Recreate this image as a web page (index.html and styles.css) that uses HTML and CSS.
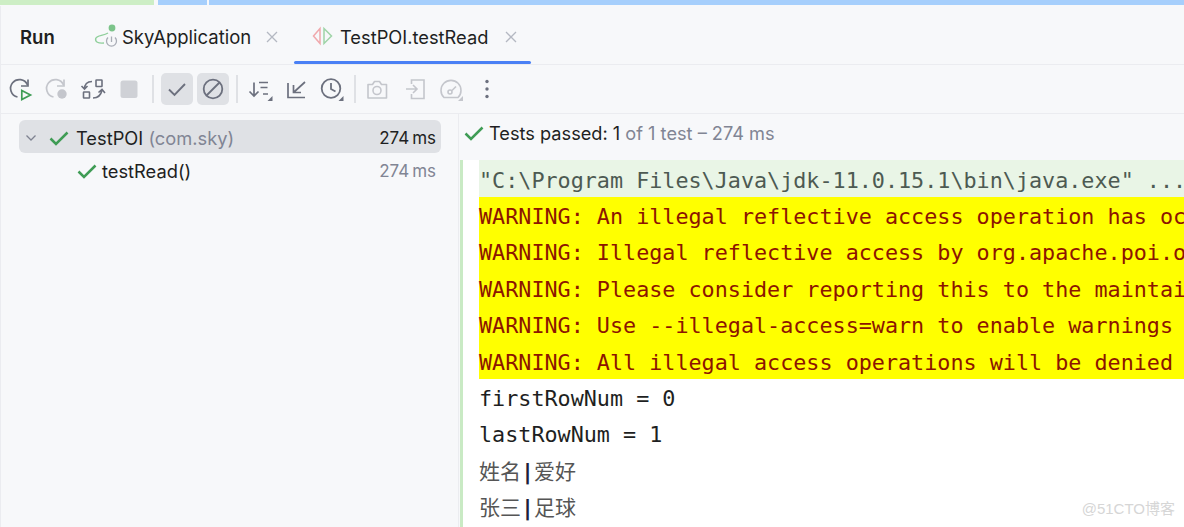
FILE: index.html
```html
<!DOCTYPE html>
<html lang="en">
<head>
<meta charset="utf-8">
<title>Run</title>
<link rel="stylesheet" href="styles.css">
</head>
<body>
<div class="strip"><span class="s-green"></span><span class="s-blue1"></span><span class="s-blue2"></span></div>
<header class="tabs">
  <div class="run-title">Run</div>
  <div class="tab tab-sky">
    <svg class="tab-icon" width="24" height="24" viewBox="0 0 24 24" fill="none">
      <circle cx="18" cy="3" r="3.400" fill="#7cc48a"/>
      <path d="M14 8C9 11 3 10 1.700 13.500C1 17 4 18.500 10 18" stroke="#8fcf9b" stroke-width="1.400"/>
      <path d="M14 12.500a5 5 0 1 0 7 0" stroke="#a9adb6" stroke-width="1.300"/>
      <path d="M17.500 11.500v5.500" stroke="#a9adb6" stroke-width="1.300"/>
    </svg>
    <span>SkyApplication</span>
    <svg class="close" width="12" height="12" viewBox="0 0 12 12"><path d="M1 1l10 10M11 1L1 11" stroke="#b4b8c2" stroke-width="1.300"/></svg>
  </div>
  <div class="tab tab-active">
    <svg class="tab-icon" width="24" height="24" viewBox="0 0 24 24" fill="none">
      <path d="M10 3.500L3.500 11l6.500 7.500z" stroke="#f0a8ac" stroke-width="1.500"/>
      <path d="M14 3.500L21.500 11 14 18.500z" stroke="#9fd4a8" stroke-width="1.500"/>
    </svg>
    <span>TestPOI.testRead</span>
    <svg class="close" width="12" height="12" viewBox="0 0 12 12"><path d="M1 1l10 10M11 1L1 11" stroke="#b4b8c2" stroke-width="1.300"/></svg>
  </div>
</header>
<nav class="toolbar">
  <span class="tool"><svg width="24" height="24" viewBox="0 0 24 24" fill="none"><path d="M8.500 20A8.800 8.800 0 1 1 18.500 8" stroke="#6c707e" stroke-width="1.700"/><path d="M19 2.500V9h-7" stroke="#6c707e" stroke-width="1.700"/><path d="M12.800 13.500l8.700 4.500-8.700 4.500z" stroke="#3f9c55" stroke-width="1.700"/></svg></span>
  <span class="tool"><svg width="24" height="24" viewBox="0 0 24 24" fill="none"><path d="M8.500 20A8.800 8.800 0 1 1 18.500 8" stroke="#c4c6cc" stroke-width="1.700"/><path d="M19 2.500V9h-7" stroke="#c4c6cc" stroke-width="1.700"/><circle cx="17" cy="17" r="4.700" fill="#c4c6cc"/></svg></span>
  <span class="tool"><svg width="24" height="24" viewBox="0 0 24 24" fill="none"><rect x="15" y="3" width="6" height="6.500" rx="0.500" stroke="#6c707e" stroke-width="1.600"/><rect x="2.500" y="15" width="6" height="6" rx="0.500" stroke="#6c707e" stroke-width="1.600"/><path d="M11 4.500C6 4.500 3.500 7.500 3.500 12M0.500 9l3 3 3-3M12 21c5 0 8-3 9-8M17.500 15.500l3.500-3 3 3.500" stroke="#6c707e" stroke-width="1.600"/></svg></span>
  <span class="tool"><svg width="24" height="24" viewBox="0 0 24 24"><rect x="3.500" y="3.500" width="17" height="17.500" rx="2.500" fill="#cfd1d6"/></svg></span>
  <i class="sep"></i>
  <span class="tool on"><svg width="24" height="24" viewBox="0 0 24 24" fill="none"><path d="M4 12.500l5.500 5.500L20 7" stroke="#6c707e" stroke-width="1.900"/></svg></span>
  <span class="tool on"><svg width="24" height="24" viewBox="0 0 24 24" fill="none"><circle cx="12" cy="12" r="9.300" stroke="#6c707e" stroke-width="1.800"/><path d="M5.500 18.500L18.500 5.500" stroke="#6c707e" stroke-width="1.800"/></svg></span>
  <i class="sep sep-mid"></i>
  <span class="tool"><svg width="24" height="24" viewBox="0 0 24 24" fill="none"><path d="M6 5.500V19M1.500 14.500L6 19l4.500-4.500M11 5.500h9M12.500 10.500h7M15 17h5" stroke="#6c707e" stroke-width="1.700"/><path d="M24.500 19v5h-5z" fill="#6c707e"/></svg></span>
  <span class="tool tool-narrow"><svg width="24" height="24" viewBox="0 0 24 24" fill="none"><path d="M4 6v14.500h17M21 5L9.500 15.500M9.500 8v7.500H17" stroke="#6c707e" stroke-width="1.700"/></svg></span>
  <span class="tool"><svg width="24" height="24" viewBox="0 0 24 24" fill="none"><circle cx="12" cy="11.500" r="9.300" stroke="#6c707e" stroke-width="1.800"/><path d="M12 6v6l4.500 2.500" stroke="#6c707e" stroke-width="1.800"/><path d="M24.500 19v5h-5z" fill="#6c707e"/></svg></span>
  <i class="sep sep-last"></i>
  <span class="tool tool-wide"><svg width="24" height="24" viewBox="0 0 24 24" fill="none"><path d="M3 7.500h4.500L9.500 4.500h5L16.500 7.500H21.500v13.500H3z" stroke="#c4c6cc" stroke-width="1.600" stroke-linejoin="round"/><circle cx="12" cy="13.500" r="4" stroke="#c4c6cc" stroke-width="1.600"/></svg></span>
  <span class="tool"><svg width="24" height="24" viewBox="0 0 24 24" fill="none"><path d="M8.500 7V3H21v18.500H8.500V17M3 12h11M10 8l4 4-4 4" stroke="#c4c6cc" stroke-width="1.600"/></svg></span>
  <span class="tool"><svg width="24" height="24" viewBox="0 0 24 24" fill="none"><path d="M5 20.500a10 10 0 1 1 14 0z" stroke="#c4c6cc" stroke-width="1.600"/><circle cx="11" cy="15" r="2" stroke="#c4c6cc" stroke-width="1.600"/><path d="M13 13.500l4-4" stroke="#c4c6cc" stroke-width="1.600"/><path d="M24 19v5h-5z" fill="#c4c6cc"/></svg></span>
  <span class="tool"><svg width="24" height="24" viewBox="0 0 24 24"><circle cx="12" cy="4.500" r="1.700" fill="#6c707e"/><circle cx="12" cy="12" r="1.700" fill="#6c707e"/><circle cx="12" cy="19.500" r="1.700" fill="#6c707e"/></svg></span>
</nav>
<main class="panes">
  <aside class="tree">
    <div class="row row-sel">
      <svg class="chev" width="12" height="12" viewBox="0 0 12 12" fill="none"><path d="M1.500 3.500L6 8l4.500-4.500" stroke="#7f8391" stroke-width="1.300"/></svg>
      <svg class="check" width="20" height="20" viewBox="0 0 20 20" fill="none"><path d="M1.500 10.500L7 16 18.500 4.500" stroke="#3f9c55" stroke-width="2.500"/></svg>
      <span class="name">TestPOI <em>(com.sky)</em></span>
      <span class="time">274<b>ms</b></span>
    </div>
    <div class="row row-child">
      <svg class="check" width="20" height="20" viewBox="0 0 20 20" fill="none"><path d="M1.500 10.500L7 16 18.500 4.500" stroke="#3f9c55" stroke-width="2.500"/></svg>
      <span class="name">testRead()</span>
      <span class="time dim">274<b>ms</b></span>
    </div>
  </aside>
  <section class="output">
    <div class="status">
      <svg class="check" width="20" height="20" viewBox="0 0 20 20" fill="none"><path d="M1.500 10.500L7 16 18.500 4.500" stroke="#3f9c55" stroke-width="2.500"/></svg>
      <span>Tests passed: 1 <em>of 1 test – 274 ms</em></span>
    </div>
    <div class="console">
      <div class="line cmd">"C:\Program Files\Java\jdk-11.0.15.1\bin\java.exe" ...</div>
      <div class="line warn">WARNING: An illegal reflective access operation has occurred</div>
      <div class="line warn">WARNING: Illegal reflective access by org.apache.poi.openxml4j.util</div>
      <div class="line warn">WARNING: Please consider reporting this to the maintainers of org</div>
      <div class="line warn">WARNING: Use --illegal-access=warn to enable warnings of further</div>
      <div class="line warn">WARNING: All illegal access operations will be denied in a future</div>
      <div class="line">firstRowNum = 0</div>
      <div class="line">lastRowNum = 1</div>
      <div class="line cjk">姓名<b>|</b>爱好</div>
      <div class="line cjk">张三<b>|</b>足球</div>
    </div>
  </section>
</main>
<div class="mark">@51CTO博客</div>
</body>
</html>
```
FILE: styles.css
```css
* { box-sizing: border-box; }
html, body { margin: 0; height: 100%; overflow: hidden; }
body { width: 1184px; height: 527px; background: #f7f8fa; color: #1e1f22; font-family: Inter, "Noto Sans", sans-serif; position: relative; display: flex; flex-direction: column; }
svg { overflow: visible; }
.strip { height: 6px; display: flex; flex: none; background: #f7f8fa; }
.s-green { width: 154px; height: 5px; background: #cdeec5; }
.s-blue1 { width: 49px; height: 5px; margin-left: 4px; background: #a6cffc; }
.s-blue2 { flex: 1; height: 5px; margin-left: 2px; background: #a6cffc; }
.tabs { height: 59px; flex: none; display: flex; align-items: stretch; border-left: 1px solid #ebecf0; border-bottom: 1px solid #ebecf0; font-size: 18.500px; padding-left: 19px; }
.run-title { width: 74px; display: flex; align-items: center; padding-top: 4px; font-weight: 600; font-size: 18.500px; }
.tab { display: flex; align-items: center; position: relative; padding-top: 4px; }
.tab-sky { width: 200px; }
.tab-icon { margin-right: 4px; flex: none; }
.tab-active { width: 237px; font-size: 18.300px; }
.tab-active .tab-icon { margin-left: 16px; margin-right: 6px; }
.close { margin-left: 15px; }
.tab-active .close { margin-left: 17px; }
.tab-active::after { content: ""; position: absolute; left: 0; right: 0; bottom: 0; height: 3px; border-radius: 2px; background: #4a80f5; }
.toolbar { height: 49px; flex: none; display: flex; align-items: center; padding-left: 4px; border-left: 1px solid #ebecf0; border-bottom: 1px solid #ebecf0; }
.tool { width: 32px; height: 32px; margin-right: 4px; border-radius: 5px; display: flex; align-items: center; justify-content: center; }
.tool-wide { margin-right: 6px; }
.tool-narrow { margin-right: 3px; }
.tool.on { background: #dfe1e5; }
.sep { width: 2px; height: 28px; background: #dfe1e5; margin: 0 7px 0 3px; }
.sep-mid { margin-right: 6px; }
.sep-last { margin-right: 5px; }
.panes { flex: 1; display: flex; min-height: 0; }
.tree { width: 459px; flex: none; border-left: 1px solid #ebecf0; border-right: 1px solid #ebecf0; padding: 6px 17px 0 18px; font-size: 18.300px; }
.row { height: 33px; display: flex; align-items: center; border-radius: 6px; }
.row-sel { background: #dfe1e5; padding: 2px 0 0 6px; }
.row-child { margin-top: 1px; padding-left: 58px; }
.chev { margin-right: 12px; }
.check { flex: none; }
.name { margin-left: 7px; }
.row-child .name { margin-left: 5px; }
em { font-style: normal; color: #818594; }
.time { margin-left: auto; padding-right: 5px; font-size: 17px; }
.time b { font-weight: 400; margin-left: 3px; }
.dim { color: #818594; }
.output { flex: 1; min-width: 0; display: flex; flex-direction: column; }
.status { height: 46px; flex: none; display: flex; align-items: center; padding: 0 0 9px 5px; font-size: 18.200px; gap: 5px; }
.console { flex: 1; margin-left: 1px; border-left: 3px solid #c9eac4; padding-left: 16px; background: #fff; overflow: hidden; font-family: "DejaVu Sans Mono", "Liberation Mono", monospace; font-size: 21.750px; }
.line { height: 36.400px; padding-top: 2px; line-height: 36.400px; white-space: nowrap; color: #1e1f22; }
.cmd { height: 37px; padding-top: 3px; background: #e9f5e6; color: #4d5a52; }
.warn { background: #ff0; color: #8c1400; }
.cjk { padding-top: 0; font-family: "Noto Sans CJK SC", "Liberation Serif", serif; font-size: 21px; color: #555; }
.cjk b { font-family: "DejaVu Sans Mono", monospace; font-weight: 700; color: #1e1f3a; font-size: 21.750px; }
.mark { position: absolute; right: 9px; bottom: 9px; font-family: "Liberation Sans", "Noto Sans CJK SC", sans-serif; font-size: 15px; color: #d6d6d6; }
```
